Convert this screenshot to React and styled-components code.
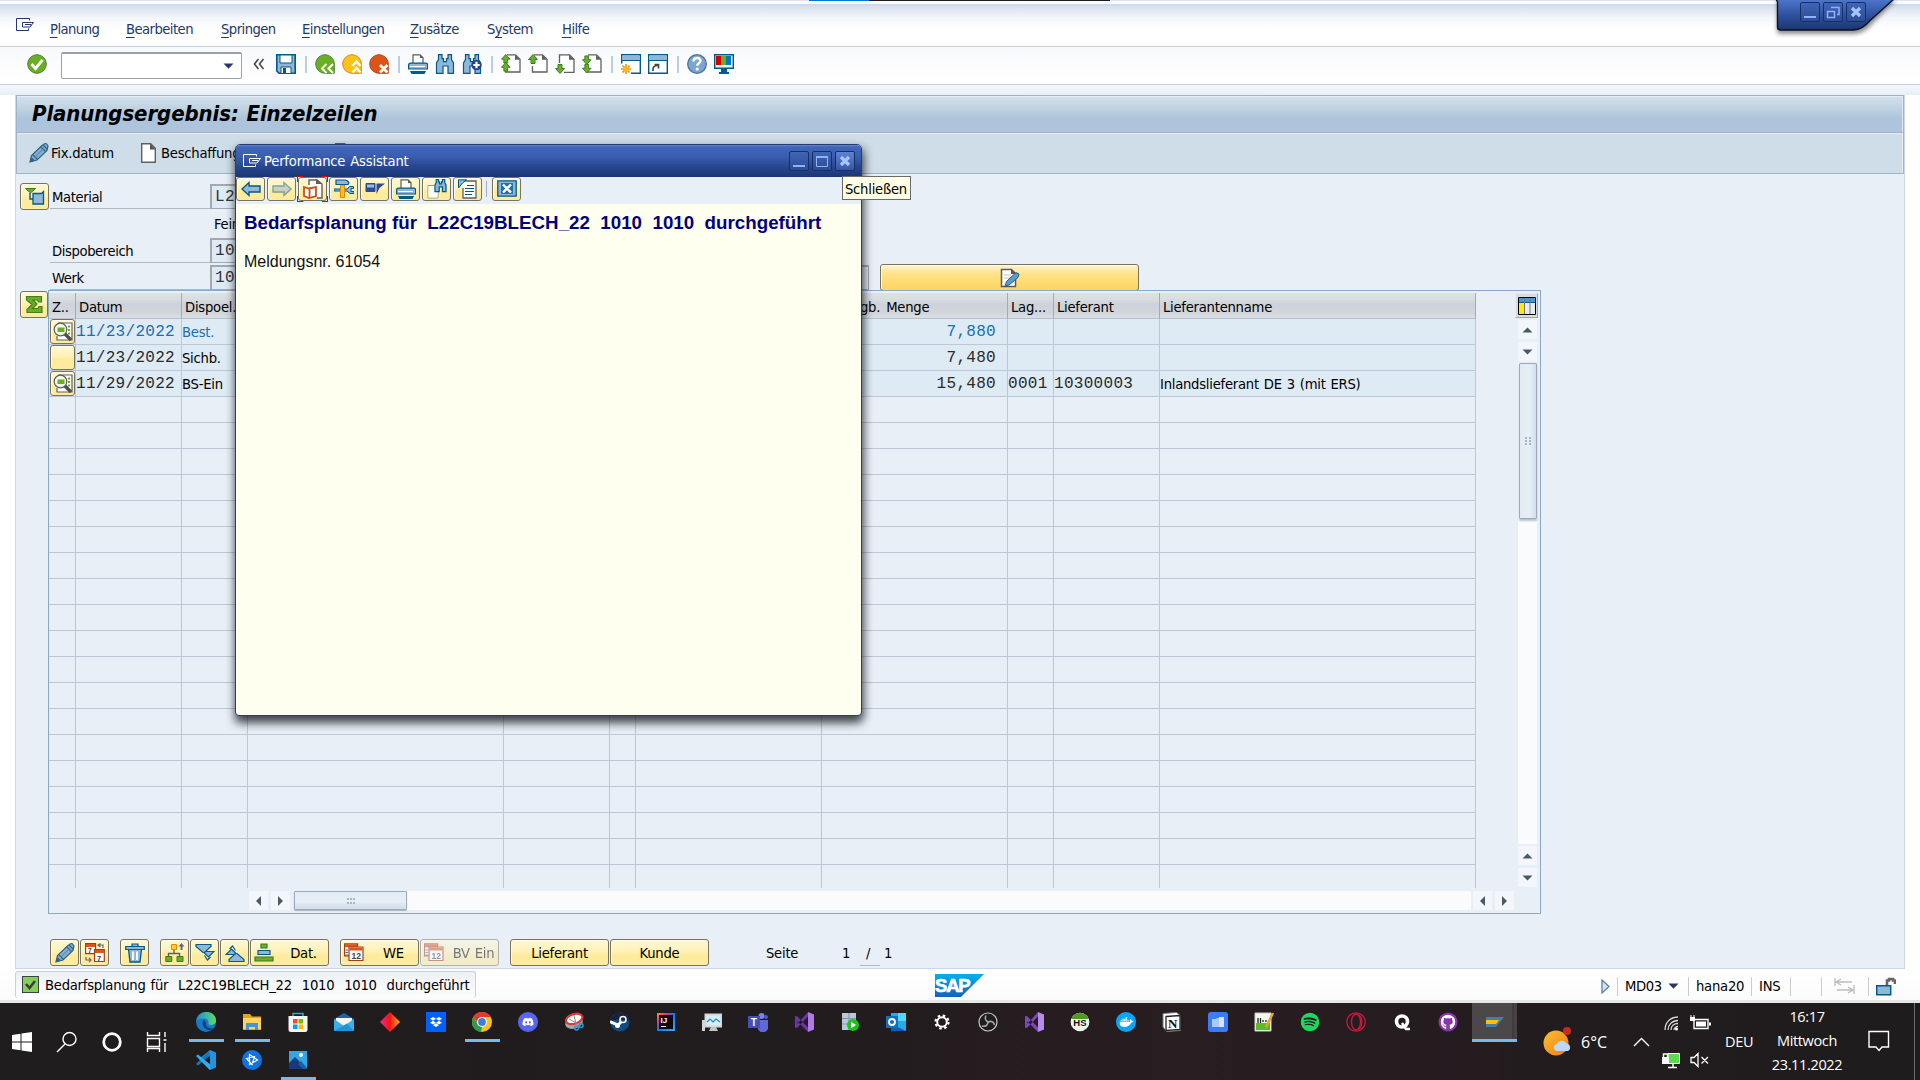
import React from "react";
import styled, { createGlobalStyle, css } from "styled-components";
import { FaDropbox, FaDiscord, FaDocker, FaSpotify, FaGithub } from "react-icons/fa";

const GlobalStyle = createGlobalStyle`
  * { box-sizing: border-box; }
  html, body { margin: 0; padding: 0; overflow: hidden; }
  body { width: 1920px; height: 1080px; background: #fff; }
`;

const ui = css`
  font-family: "DejaVu Sans Condensed", "DejaVu Sans", "Noto Sans", sans-serif;
  font-stretch: condensed;
  font-size: 14.67px;
  letter-spacing: -0.25px;
  word-spacing: 1px;
  line-height: 20px;
  white-space: pre;
`;
const mono = css`
  font-family: "Liberation Mono", monospace;
  font-size: 16px;
  letter-spacing: 0.3px;
`;

/* ---------- frame ---------- */
const Screen = styled.div`
  ${ui}
  position: relative;
  width: 1920px;
  height: 1080px;
  display: flex;
  flex-direction: column;
  background: #fdfdfe;
  color: #000;
`;
const TopEdge = styled.div`
  height: 4px;
  flex: none;
  background: linear-gradient(90deg, #dbe5f5 809px, #0078d7 809px, #0078d7 869px, #1d1d20 869px, #1d1d20 1110px, #dbe5f5 1110px) 0 0 / 100% 1px no-repeat, #fbfcff;
`;
const MenuBar = styled.div`
  height: 43px;
  flex: none;
  display: flex;
  align-items: flex-start;
  padding: 13px 0 0 16px;
  background: linear-gradient(#ccd8e9, #dfe6f1 5px, #f4f7fb 14px, #fff 26px);
  border-bottom: 1px solid #c9d2de;
`;
const MenuItem = styled.span`
  width: ${(p) => p.$w}px;
  margin-top: 2px;
  color: #26386b;
  letter-spacing: ${(p) => p.$ls ?? -0.55}px;
  u { text-underline-offset: 3px; text-decoration-thickness: 1px; }
`;
const MenuIcon = styled.span`
  width: 34px;
  display: flex;
`;
const ToolBar = styled.div`
  height: 38px;
  flex: none;
  display: flex;
  align-items: center;
  gap: 7px;
  padding: 0 0 3px 27px;
  background: linear-gradient(#f7f9fc, #fff);
  border-bottom: 1px solid #c5cfdd;
`;
const Separator = styled.span`
  width: 5px;
  height: 17px;
  background: linear-gradient(90deg, transparent 2px, #b9cde4 2px, #b9cde4 4px, transparent 4px);
`;
const ComboBox = styled.div`
  width: 181px;
  height: 27px;
  margin: 3px 5px 0 7px;
  border: 1px solid #9aa0a8;
  border-top-width: 2px;
  border-radius: 2px;
  background: #fff;
  display: flex;
  align-items: center;
  justify-content: flex-end;
  padding-right: 7px;
`;
const Chevrons = styled.span`
  width: 12px;
  margin: 0 4px 0 -1px;
  display: flex;
`;
const WorkArea = styled.div`
  height: 884px;
  flex: none;
  padding: 10px 15px 0;
  background: linear-gradient(#f5f7fb, #e9eef6 10px, #fff 10px);
`;
const Body = styled.div`
  height: 874px;
  display: flex;
  flex-direction: column;
  border: 1px solid #cdd8e6;
  border-top: 0;
  background: #e8eff7;
`;
const Heading = styled.h1`
  height: 38px;
  flex: none;
  margin: 0;
  padding: 0 0 1px 15px;
  display: flex;
  align-items: center;
  border: 1px solid #9db3c9;
  box-shadow: inset 0 1px #e4eef7, inset -1px 0 #dfe9f3;
  background: linear-gradient(#d2e1ee, #bfd2e0 35%, #adc4dc 62%, #adc4dc);
  font-size: 22px;
  font-weight: bold;
  font-style: italic;
  letter-spacing: -0.1px;
`;
const AppBar = styled.div`
  height: 41px;
  flex: none;
  display: flex;
  align-items: center;
  padding-left: 12px;
  border: 1px solid #9fb4c8;
  border-top: 0;
  box-shadow: inset 0 1px #e6eef4, inset -1px 0 #e6eef4;
  background: #cfdde8;
`;
const AppAction = styled.span`
  display: flex;
  align-items: center;
  gap: ${(p) => p.$gap ?? 2}px;
  width: ${(p) => p.$w}px;
`;

/* ---------- content ---------- */
const Main = styled.div`
  display: flex;
  padding: 9px 0 0 4px;
`;
const Gutter = styled.div`
  width: 28px;
  flex: none;
  display: flex;
  flex-direction: column;
  gap: 81px;
`;
const Button = styled.button`
  ${ui}
  width: ${(p) => p.$w ?? 29}px;
  height: ${(p) => p.$h ?? 27}px;
  flex: none;
  padding: 0;
  display: flex;
  align-items: center;
  justify-content: center;
  border: 1.5px solid #77735f;
  border-radius: 3px;
  color: #000;
  background: ${(p) =>
    p.$strong
      ? "linear-gradient(#fff3cf, #ffe28a 35%, #ffdc74 65%, #fbd463)"
      : "linear-gradient(#fff8d6, #fff2b8 45%, #ffeb9c 60%, #fdeb9f)"};
  box-shadow: inset 1px 1px #fffbe9;
  opacity: ${(p) => (p.$dim ? 0.5 : 1)};
`;
const ButtonText = styled.span`
  flex: 1;
  text-align: center;
  padding-left: ${(p) => p.$pad ?? 0}px;
`;
const Column = styled.div`
  display: flex;
  flex-direction: column;
`;
const Form = styled.div`
  display: flex;
  flex-direction: column;
  padding: 1px 0 0 2px;
`;
const FormRow = styled.div`
  display: flex;
  height: ${(p) => p.$h ?? 27}px;
`;
const Label = styled.div`
  width: 160px;
  height: 25px;
  padding: 3px 0 0 2px;
  letter-spacing: -0.4px;
  border-bottom: 1px solid ${(p) => (p.$plain ? "transparent" : "#b5b8bb")};
`;
const Field = styled.div`
  ${mono}
  width: ${(p) => p.$w ?? 460}px;
  height: 25px;
  padding: 1px 0 0 3px;
  color: #333;
  background: #dfebf4;
  border: 1px solid #a3a9ae;
  border-width: 2px 1px 1px 2px;
`;
const FieldText = styled.div`
  padding: 3px 4px;
`;
const ButtonSlot = styled.div`
  margin: -1px 0 -3px 11px;
`;
const TableBox = styled.div`
  width: 1493px;
  height: 624px;
  border: 1px solid #8aa9c8;
  display: flex;
  flex-direction: column;
`;
const TableTop = styled.div`
  display: flex;
  height: 597px;
`;
const Grid = styled.div`
  width: 1427px;
`;
const columnWidths = [27, 106, 66, 256, 106, 26, 186, 186, 46, 106, 316];
const Row = styled.div`
  display: grid;
  grid-template-columns: ${columnWidths.map((w) => w + "px").join(" ")};
  height: ${(p) => p.$h ?? 26}px;
`;
const HeadCell = styled.div`
  margin-top: 2px;
  height: 26px;
  padding: 4px 0 0 3px;
  overflow: hidden;
  border-right: 1px solid #a4abb3;
  border-bottom: 1px solid #b5c1d0;
  background: linear-gradient(#dee2e5, #d8dde0 25%, #cdd3db 45%, #d2d5dc 80%, #dbe0e4);
`;
const Cell = styled.div`
  height: 100%;
  overflow: hidden;
  padding: 3px 0 0;
  border-right: 1px solid #bdc7d6;
  border-bottom: ${(p) => (p.$open ? 0 : 1)}px solid #bdc7d6;
  background: ${(p) => (p.$filled ? "#deebf5" : "transparent")};
  color: ${(p) => (p.$link ? "#1a6fae" : "#000")};
  ${(p) => p.$mono && mono}
  ${(p) => p.$mono && !p.$link && "color: #2a2a2a;"}
  ${(p) => p.$right && "text-align: right; padding-right: 11px;"}
  ${(p) => p.$button && "padding: 0 0 0 1px;"}
`;
const Rail = styled.div`
  width: 64px;
  padding: 2px 2px 0 0;
  display: flex;
  flex-direction: column;
  align-items: flex-end;
`;
const ConfigButton = styled.div`
  width: 23px;
  height: 25px;
  display: flex;
  align-items: center;
  justify-content: center;
  border: 1px solid #e8ebee;
  border-right-color: #9fa5ab;
  border-bottom-color: #9fa5ab;
  background: #d9dce1;
`;
const ArrowButton = styled.div`
  width: 19px;
  height: 19px;
  flex: none;
  display: flex;
  align-items: center;
  justify-content: center;
  background: #f3f6fa;
  margin: ${(p) => p.$m ?? "0"};
  svg { transform: rotate(${(p) => p.$turn ?? 0}deg); }
`;
const VTrack = styled.div`
  width: 19px;
  height: 481px;
  margin: 2px 1px 2px 0;
  background: #fafbfd;
`;
const thumb = css`
  display: flex;
  align-items: center;
  justify-content: center;
  border: 1px solid #9ba9b9;
  border-radius: 1px;
`;
const VThumb = styled.div`
  ${thumb}
  width: 18px;
  height: 156px;
  margin-left: 1px;
  background: linear-gradient(90deg, #e2ebf3, #e7eef6 60%, #d2deeb);
  box-shadow: 0 2px 2px #b9c2cc;
`;
const HScroll = styled.div`
  display: flex;
  align-items: center;
  height: 21px;
  padding-left: 200px;
  margin-top: 2px;
`;
const HTrack = styled.div`
  width: 1177px;
  height: 19px;
  margin: 0 2px 0 4px;
  background: #fbfbfc;
`;
const HThumb = styled.div`
  ${thumb}
  width: 113px;
  height: 19px;
  background: linear-gradient(#e2ebf4, #e7eef6 55%, #cfdcea);
  box-shadow: 0 1px 1px #aab3bd;
`;
const Footer = styled.div`
  display: flex;
  align-items: center;
  padding: 25px 0 0 34px;
`;
const ButtonGroup = styled.div`
  display: flex;
  gap: 1px;
  margin-right: ${(p) => p.$mr ?? 11}px;
`;
const Pager = styled.div`
  display: flex;
  padding-left: 46px;
`;
const PagerPart = styled.span`
  width: ${(p) => p.$w}px;
  height: 24px;
  padding: 1px 0 0 ${(p) => p.$pad ?? 0}px;
  margin-top: 2px;
  border-bottom: 1px solid ${(p) => (p.$line ? "#b5b8bb" : "transparent")};
`;

/* ---------- status bar ---------- */
const StatusBar = styled.div`
  height: 34px;
  flex: none;
  display: flex;
  align-items: flex-start;
  background: linear-gradient(#fff, #fbfbfc 31px, #e6e8e8 31px);
`;
const StatusMessage = styled.div`
  width: 461px;
  height: 27px;
  margin: 2px 0 0 15px;
  padding: 3px 0 0 6px;
  display: flex;
  gap: 6px;
  align-items: flex-start;
  border: 1px solid #c6d2e2;
  border-bottom: 0;
  border-radius: 3px;
  background: linear-gradient(#edf1f7, #fcfdfe);
`;
const Check = styled.span`
  width: 17px;
  height: 17px;
  margin-top: 1px;
  display: flex;
  border: 1px solid #3b4049;
  background: #84cf57;
`;
const LogoSlot = styled.div`
  width: 49px;
  height: 23px;
  margin: 5px 616px 0 459px;
`;
const StatusRight = styled.div`
  display: flex;
  align-items: center;
  width: 320px;
  height: 24px;
  margin-top: 5px;
`;
const StatusCell = styled.span`
  display: flex;
  align-items: center;
  gap: 6px;
  height: 19px;
  width: ${(p) => p.$w}px;
  padding-left: ${(p) => p.$pad ?? 7}px;
  letter-spacing: ${(p) => p.$ls ?? -0.25}px;
  border-left: 1px solid ${(p) => (p.$first ? "transparent" : "#c9cdd2")};
`;

/* ---------- taskbar ---------- */
const TaskBar = styled.div`
  height: 77px;
  flex: none;
  display: flex;
  background: linear-gradient(90deg, #1f1d1e, #211c1e 40%, #281d21 62%, #231c1f 80%, #1e1c1d);
  color: #fff;
  font-family: "Open Sans", "Noto Sans", sans-serif;
  font-stretch: normal;
  font-size: 14.5px;
  letter-spacing: -0.35px;
  word-spacing: 0;
`;
const StartGroup = styled.div`
  width: 183px;
  padding-left: 10px;
  display: flex;
  align-items: center;
  gap: 21px;
  svg { flex: none; }
`;
const TaskGrid = styled.div`
  display: grid;
  grid-template-columns: repeat(29, 46px);
  grid-template-rows: 39px 38px;
  width: 1334px;
`;
const Task = styled.div`
  display: flex;
  flex-direction: column;
  align-items: center;
  padding-top: ${(p) => (p.$second ? 8 : 9)}px;
  background: ${(p) => (p.$active ? "linear-gradient(90deg, #4c4849 40px, #363234 41px, #474344 42px)" : "transparent")};
  background-clip: padding-box;
  border-left: ${(p) => (p.$active ? 1 : 0)}px solid transparent;
  justify-content: space-between;
  &::after {
    content: "";
    width: ${(p) => (p.$active ? 45 : 35)}px;
    height: 3px;
    background: ${(p) => (p.$open ? "#76b9ed" : "transparent")};
  }
`;
const Weather = styled.div`
  width: 108px;
  display: flex;
  align-items: center;
  gap: 9px;
  padding: 0 0 0 25px;
  font-size: 16px;
  letter-spacing: 0;
`;
const TrayCaret = styled.div`
  width: 36px;
  display: flex;
  align-items: center;
  padding-left: 8px;
`;
const TrayIcons = styled.div`
  display: grid;
  grid-template-columns: 29px 22px;
  grid-template-rows: 39px 36px;
  align-items: center;
  width: 63px;
`;
const Language = styled.div`
  width: 42px;
  display: flex;
  align-items: center;
  padding: 0 0 0 1px;
`;
const Clock = styled.div`
  width: 82px;
  padding-top: 2px;
  line-height: 24px;
  text-align: center;
`;
const Notice = styled.div`
  flex: 1;
  display: flex;
  align-items: center;
  padding: 0 0 1px 20px;
`;
const ShowDesktop = styled.div`
  width: 6px;
  border-left: 1px solid #6d6a6b;
`;

/* ---------- dialog ---------- */
const Dialog = styled.section`
  position: absolute;
  left: 235px;
  top: 144px;
  width: 627px;
  height: 572px;
  display: flex;
  flex-direction: column;
  border: 1px solid #253c78;
  border-radius: 5px 5px 4px 4px;
  background: #fffff0;
  box-shadow: 0 7px 10px rgba(20, 25, 30, 0.7), 3px 3px 8px rgba(20, 25, 30, 0.35);
`;
const DialogTitle = styled.header`
  height: 32px;
  flex: none;
  display: flex;
  align-items: center;
  padding: 0 6px 1px 7px;
  color: #fff;
  border-radius: 4px 4px 0 0;
  background: linear-gradient(#6583c9, #4066ba 2px, #3a5eb0 35%, #26458e 70%, #1c3672);
`;
const DialogTitleText = styled.span`
  flex: 1;
  padding-left: 1px;
  letter-spacing: -0.2px;
`;
const WindowButtons = styled.div`
  display: flex;
  gap: 3px;
`;
const WindowButton = styled.span`
  width: 20px;
  height: 20px;
  display: flex;
  align-items: center;
  justify-content: center;
  border: 1px solid #182f66;
  border-radius: 2px;
  background: ${(p) => (p.$hot ? "linear-gradient(#5f82d6, #3557a5)" : "linear-gradient(#4165b5, #2c4c94)")};
`;
const DialogTools = styled.div`
  height: 27px;
  flex: none;
  display: flex;
  gap: 2px;
  background: #e8eff7;
`;
const DialogSep = styled.span`
  width: 4px;
  height: 16px;
  margin-top: 4px;
  border-left: 1px solid #a9adb2;
  margin-left: 2px;
`;
const FocusFrame = styled.span`
  display: flex;
  margin: -1px -1px;
  padding: 1px;
  background:
    linear-gradient(#e00, #e00) 0 0 / 6px 1px, linear-gradient(#e00, #e00) 0 0 / 1px 6px,
    linear-gradient(#e00, #e00) 100% 0 / 6px 1px, linear-gradient(#e00, #e00) 100% 0 / 1px 6px,
    linear-gradient(#e00, #e00) 0 100% / 6px 1px, linear-gradient(#e00, #e00) 0 100% / 1px 6px,
    linear-gradient(#e00, #e00) 100% 100% / 6px 1px, linear-gradient(#e00, #e00) 100% 100% / 1px 6px;
  background-repeat: no-repeat;
  height: 26px;
`;
const DialogText = styled.div`
  padding: 8px 0 0 8px;
  font-family: "Liberation Sans", Arial, sans-serif;
  font-size: 16px;
  letter-spacing: 0;
  word-spacing: 0;
  color: #111;
`;
const DialogHeading = styled.h2`
  margin: 0 0 18px;
  font-size: 18.75px;
  line-height: 22px;
  letter-spacing: 0;
  color: #00007f;
`;
const Tooltip = styled.div`
  position: absolute;
  left: 842px;
  top: 176px;
  width: 69px;
  height: 24px;
  padding: 2px 0 0 2px;
  border: 1px solid #6a6a6a;
  background: #ffffe6;
`;
const CornerControls = styled.div`
  position: absolute;
  left: 1770px;
  top: 0;
  width: 130px;
  height: 40px;
`;
const CornerButtons = styled.div`
  position: absolute;
  left: 30px;
  top: 2px;
  display: flex;
  gap: 3px;
`;

/* ---------- icons ---------- */
const Svg = ({ s = 20, w, h, vb, children, ...rest }) => (
  <svg width={w ?? s} height={h ?? s} viewBox={vb ?? `0 0 ${w ?? s} ${h ?? s}`} fill="none" {...rest}>{children}</svg>
);
const B = "#005a8c", L = "#91b6d8", G = "#6aaf23", GD = "#3b7a2a";
const glyphText = { fontFamily: "Liberation Sans, sans-serif", fontWeight: "bold", letterSpacing: 0 };

const MenuExit = ({ c = "#26386b" }) => (
  <Svg w={20} h={16} stroke={c} strokeWidth="1">
    <path d="M13.500 3.500v-2H.5v12h12v-2" /><path d="M6.500 5.500h11l-2.500 3M6.500 5.500v4.500h7.500l1.500-2M9 7.500h6" />
  </Svg>
);
const OkIcon = () => (
  <Svg><circle cx="10" cy="10" r="9.300" fill={G} stroke="#527d3c" /><path d="M4.500 10l4 4.500L15.500 6" stroke="#fff" strokeWidth="2.800" /></Svg>
);
const SaveIcon = () => (
  <Svg><path d="M.8.800h18.400v18.400H3L.8 17z" fill={L} stroke={B} strokeWidth="1.600" /><path d="M4 1h12v8H4z" fill="#fff" stroke={B} /><path d="M5 19v-6h10v6" fill="#fff" stroke={B} /><path d="M7 14h3v5H7z" fill={B} /></Svg>
);
const RoundIcon = ({ fill, stroke, kind }) => (
  <Svg>
    <path d="M10 .7a9.300 9.300 0 1 0 0 18.600h9.300V10A9.300 9.300 0 0 0 10 .7z" fill={fill} stroke={stroke} />
    {kind === "back" && <path d="M11.500 10l-4.500 4.500 4.500 4.500M18 10l-4.500 4.500L18 19" stroke="#fff" strokeWidth="2" />}
    {kind === "up" && <path d="M10.500 12l4-4.500 4 4.500M10.500 18.500l4-4.500 4 4.500" stroke="#fff" strokeWidth="2.200" />}
    {kind === "x" && <path d="M11 11l7.500 7.500M18.500 11L11 18.500" stroke="#fff" strokeWidth="2.800" />}
  </Svg>
);
const Printer = () => (
  <Svg><path d="M5 9V.8h7l3 3V9" fill="#fff" stroke="#5a5a5a" strokeWidth="1.200" /><path d="M12 .5v3.500h3.500z" fill="#5a5a5a" /><path d="M.6 11c0-1.500.5-1.900 2-1.900h15c1.300 0 2 .4 2 1.900v4H.6z" fill={L} stroke={B} strokeWidth="1.200" /><path d="M2 12.500h15" stroke="#fff" /><path d="M2 17h16l-1.500 3h-13z" fill={B} /></Svg>
);
const binocPath = "M3.500 .6h3.500v4h1.500v3h3v-3H13v-4h3.500v5l2 3.400v10.400h-5.500v-7.400H8v7.400H1.500V9l2-3.400z";
const Binoc = ({ plus }) => (
  <Svg><path d={binocPath} fill={L} stroke={B} strokeWidth="1.200" />
    {plus && <><circle cx="14.500" cy="11" r="5.200" fill="#26418f" /><path d="M14.500 7.800v6.400M11.300 11h6.400" stroke="#fff" strokeWidth="2.200" /></>}</Svg>
);
const up = (x, y) => `M${x} ${y}l4.500 5h-2.500v4h-4v-4h-2.500z`;
const down = (x, y) => `M${x} ${y}l4.500-5h-2.500v-4h-4v4h-2.500z`;
const PageIcon = ({ kind }) => (
  <Svg>
    <path d={kind === "down" ? "M4.500 9V.8h10l4.500 4.500v13H9" : "M6 .8h8.500l4.500 4.500V18H4.500v-6"} fill="#fff" stroke="#5f5f5f" strokeWidth="1.300" />
    <path d="M14 .8v5h5z" fill="#5f5f5f" />
    <g fill={G} stroke={GD} strokeWidth="1">
      {kind === "first" && <><path d={up(5, .5)} transform="scale(.95)" /><path d={up(5, 9)} transform="scale(.95)" /></>}
      {kind === "up" && <path d={up(5, .5)} />}
      {kind === "down" && <path d={down(5, 19.500)} />}
      {kind === "last" && <><path d={down(5, 11)} transform="scale(.95)" /><path d={down(5, 20)} transform="scale(.95)" /></>}
    </g>
  </Svg>
);
const WindowIcon = ({ link }) => (
  <Svg><path d="M.7.700h18.600v18.600H.7z" fill="#fff" stroke={B} strokeWidth="1.400" /><path d="M1.400 1.400h17.200V6H1.400z" fill={L} /><path d="M1 6.500h18" stroke={B} />
    {link ? <path d="M5 17c-.5-4 1-5.500 4.500-5.500M6.500 10.500h4v4" stroke="#444" strokeWidth="1.700" />
      : <><path d="M0 9.500h10V20H0z" fill="#fff" /><path d="M5 10v10M0 15h10M1.500 11.500l7 7M8.500 11.500l-7 7" stroke="#f39200" strokeWidth="1.600" /><circle cx="5" cy="15" r="2.800" fill="#ffb81a" /></>}
  </Svg>
);
const HelpIcon = () => (
  <Svg><circle cx="10" cy="10" r="9.300" fill="#7da6cd" stroke="#44749c" strokeWidth="1.300" /><path d="M6.500 7.500c0-4.500 7-4.500 7-.7 0 2.200-3.300 2.400-3.300 5" stroke="#fff" strokeWidth="2.400" /><circle cx="10.200" cy="15" r="1.600" fill="#fff" /></Svg>
);
const MonitorIcon = () => (
  <Svg><path d="M.7.700h18.600v13.600H.7z" fill="#e8f0f7" stroke={B} strokeWidth="1.400" /><path d="M2 2h5v9H2z" fill="#d40000" /><path d="M7 2h5v9H7z" fill={G} /><path d="M12 2h5v9h-5z" fill="#0078c0" /><path d="M7 14h6v4H7z" fill={B} /><path d="M5 18h10v2H5z" fill={B} /></Svg>
);
const Pencil = () => (
  <Svg><path d="M1 19l1.500-6.500L12.500 3l2.500-2 2-.5L19 3l-1 4.500L8 17z" fill="#86b0d2" stroke="#2b6488" strokeWidth="1.200" /><path d="M1 19l1.500-5 3.500 3.500z" fill="#2b6488" /><path d="M11.500 3.500l5 5M3.500 11.500l5 5M14 2l4 4" stroke="#2b6488" strokeWidth="1.200" /><path d="M6 14l8-8" stroke="#5f92b6" strokeWidth="1.200" /></Svg>
);
const Doc = () => (
  <Svg w={15} h={20}><path d="M.7.700h9l4.600 4.600v14H.7z" fill="#fff" stroke="#606060" strokeWidth="1.400" /><path d="M9 .5v6h5.500z" fill="#555" /></Svg>
);
const DetailIcon = () => (
  <Svg><path d="M.5 1.500h10L5.500 6z" fill={G} stroke={GD} /><path d="M5 6v6h3" stroke={B} strokeWidth="1.400" /><path d="M8 6.500h8.500l2-2V17H8z" fill={L} stroke={B} strokeWidth="1.300" /></Svg>
);
const SumIcon = () => (
  <Svg><path d="M2.500 1.500h15V7h-3l-1-2H9l4 4-4.500 4.500h5.500l1-2h3v6h-15v-3L8 9.500 2.500 5z" fill={G} stroke="#467e1d" strokeWidth="1.200" /></Svg>
);
const LensIcon = () => (
  <Svg><path d="M5 1h14v17H4v-4" fill="#fff" stroke="#606060" strokeWidth="1.200" /><path d="M15 3.500h2v2h-2zM15 7h2v2h-2zM15 10.500h2v2h-2z" fill={G} /><circle cx="7.500" cy="7.500" r="6.300" fill="#f4f7ee" stroke="#5d5d5d" strokeWidth="1.200" /><path d="M4.500 5.500h7V10h-7z" fill={G} /><path d="M12 12l6 6" stroke="#4d4d4d" strokeWidth="3.400" /></Svg>
);
const EditDoc = () => (
  <Svg><path d="M1.500 1.500h10l4 4V18.500h-14z" fill="#fff" stroke="#5c5c5c" strokeWidth="1.500" /><path d="M11 1v5h5z" fill="#555" /><path d="M4 7h7M4 10h6" stroke="#c4c4c4" /><path d="M5 18l1.500-4.500L16 4.500l3 1.500-1 3.500L9 17z" fill="#5f9cc4" stroke="#20618c" /></Svg>
);
const Tri = () => <Svg w={11} h={6}><path d="M5.500.5L10.500 5.500H.5z" fill="#475a6b" /></Svg>;
const ComboTri = () => <Svg w={11} h={6}><path d="M.5.500h10L5.500 5.800z" fill="#26386b" /></Svg>;
const Grip = ({ turn }) => (
  <Svg w={8} h={6} transform={turn ? "rotate(90)" : undefined}><path d="M0 0h2v2H0zM3 0h2v2H3zM6 0h2v2H6zM0 4h2v2H0zM3 4h2v2H3zM6 4h2v2H6z" fill="#a7b6c6" /></Svg>
);
const ConfigIcon = () => (
  <Svg w={18} h={18}><path d="M.5.500h17v17H.5z" fill="#e8ebee" stroke="#000" /><path d="M1 1h16v4H1z" fill="#4b95d0" /><path d="M1 5.500h16" stroke="#15588e" /><path d="M1 6h5v11H1z" fill="#ffea00" /><path d="M6.500 1v16M12 1v16" stroke="#777" /></Svg>
);
const Calendars = ({ swap }) => swap ? (
  <Svg><g strokeWidth="1.200"><path d="M.6.600h10v10H.6z" fill="#fff" stroke="#a83a20" /><path d="M1 1h9v3H1z" fill="#dc5418" /><path d="M9.500 6.500h9.800v12H9.500z" fill="#fff" stroke="#a83a20" /><path d="M10 7h9v3h-9z" fill="#dc5418" /><path d="M13 2h5v3M15.500 .5L13 2l2.500 2M1 14v3h4M4 15l2 2-2 2" stroke="#666" /></g><text x="3" y="10" fontSize="6.500" fill="#333" style={glyphText}>7</text><text x="12" y="17.500" fontSize="7.500" fill="#333" style={glyphText}>7</text></Svg>
) : (
  <Svg><g strokeWidth="1.200"><path d="M.6 .8h13v12H.6z" fill="#fff" stroke="#a83a20" /><path d="M1 1.200h12v3H1z" fill="#dc5418" /><path d="M1.500 7h2.500M1.500 9.500h2.500M1.500 12h2.500" stroke="#666" /><path d="M5 4h14v13.500H5z" fill="#fff" stroke="#a83a20" /><path d="M5.500 4.500h13v3h-13z" fill="#dc5418" /></g><text x="7.500" y="15.500" fontSize="8.500" fill="#444" style={glyphText}>12</text></Svg>
);
const Trash = () => (
  <Svg><path d="M3.500 6h13l-1.500 13H5z" fill={L} stroke={B} strokeWidth="1.300" /><path d="M.7 3.500h18.600v3H.7zM7 3V1h6v2" fill={L} stroke={B} strokeWidth="1.200" /><path d="M8 8.500v8.500M12 8.500v8.500" stroke="#fff" strokeWidth="1.800" /></Svg>
);
const Tree = () => (
  <Svg><path d="M9 7v4M3.500 14v-3.500h11V14" stroke="#606060" strokeWidth="1.400" /><path d="M6.500 1.500h5v5h-5z" fill="#ffd02a" stroke="#e58b00" /><path d="M.8 13.500h6v5h-6zM12 13.500h6v5h-6z" fill={G} stroke={GD} /><path d="M16.500 0l3 3.500h-2V7h-2V3.500h-2z" fill="#666" /></Svg>
);
const Filter = ({ flip }) => (
  <Svg transform={flip ? "rotate(180)" : undefined}><g fill={L} stroke={B} strokeWidth="1.200"><path d="M8 8.500h11l-5.500 5.500z" /><path d="M1 1.500h15v2l-6.500 6H8L1 3.500z" /><path d="M9.500 12.500l3 4.500 3-3" fill="none" /></g></Svg>
);
const Stack = () => (
  <Svg><path d="M7 1h6v4H7zM1 14h18v4H1z" fill={G} stroke={GD} strokeWidth="1.200" /><path d="M4 7.500h12v4H4z" fill={L} stroke={B} strokeWidth="1.200" /></Svg>
);
const Arrow = ({ flip, dim }) => (
  <Svg opacity={dim ? 0.5 : 1} transform={flip ? "scale(-1 1)" : undefined}><path d="M1 10l7-6.500V7h11v6H8v3.500z" fill={L} stroke={B} strokeWidth="1.400" /></Svg>
);
const BookIcon = () => (
  <Svg><path d="M6 6V1h8l5 4v14h-5" fill="#fff" stroke="#5f5f5f" strokeWidth="1.400" /><path d="M13 0v5h6z" fill="#5f5f5f" /><path d="M1 8l5 1.500 7-1.500v9l-7 2-5-2z" fill="#fff" stroke="#c8501c" strokeWidth="1.800" /><path d="M6.500 9v10" stroke="#c8501c" strokeWidth="1.800" /></Svg>
);
const ToolsIcon = () => (
  <Svg><path d="M0 10h13l2.500-2.500h4v2H17v3h3v2h-4L13 12H0z" fill={L} stroke={B} /><path d="M6.500 6h4v12.500h-4z" fill="#ffbf1f" stroke="#e08a00" /><path d="M2 1h9c2 0 3 1 4 3l-1 1.500H2z" fill={L} stroke={B} strokeWidth="1.200" /></Svg>
);
const ToggleIcon = () => (
  <Svg><path d="M1 4.500h9v8H1z" fill="#2c4c92" stroke="#2c4c92" /><path d="M2 5.500h7v3H2z" fill="#9bbbe0" /><path d="M11.500 4.500H20l-5.500 4.500-3 6z" fill="#2c4c92" /></Svg>
);
const FindDoc = () => (
  <Svg><path d="M1 6.500h6M1 6.500v12.500h10v-8" fill="none" stroke="#9a9a9a" /><path d="M1.500 7h9v11.500h-9z" fill="#fdfdf6" /><g transform="translate(7 0) scale(.65)"><path d={binocPath} fill={L} stroke={B} strokeWidth="1.900" /></g></Svg>
);
const DocList = () => (
  <Svg><path d="M5 2h13v17H5V9" fill="#fff" stroke="#5f5f5f" strokeWidth="1.300" /><path d="M.5 .8h8L4.500 4 .5 9z" fill={L} stroke={B} /><path d="M9 6.500h7M7 9.500h9M7 12.500h9M7 15.500h7" stroke={B} /></Svg>
);
const CloseBox = () => (
  <Svg><path d="M.8 1.800h18.400v15.400H.8z" fill={L} stroke={B} strokeWidth="1.300" /><path d="M4 4h12v11H4z" fill={B} opacity=".75" /><path d="M6 5.500l8 8M14 5.500l-8 8" stroke="#fff" strokeWidth="2.400" /></Svg>
);
const WinGlyph = ({ kind }) => (
  <Svg w={14} h={14} stroke="#8fb2ff" strokeWidth="2">
    {kind === "min" && <path d="M1 12h12" />}
    {kind === "max" && <><path d="M1.500 2.500h11v10h-11z" strokeWidth="1" /><path d="M1 3h12" /></>}
    {kind === "restore" && <path d="M1.500 6.500h7v6h-7zM5 2.500h8v7h-2" strokeWidth="1.500" />}
    {kind === "close" && <path d="M3 3l8 8M11 3l-8 8" strokeWidth="3.200" stroke="#a9c4ff" />}
  </Svg>
);
const SapLogo = () => (
  <Svg w={49} h={23}>
    <defs><linearGradient id="sap" x2="0" y2="1"><stop stopColor="#00b1eb" /><stop offset="1" stopColor="#1661be" /></linearGradient></defs>
    <path d="M0 0h49L26 23H0z" fill="url(#sap)" />
    <text x="0" y="18" fontFamily="Liberation Sans" fontWeight="bold" fontSize="18.500" fill="#fff" stroke="#fff" strokeWidth=".7" letterSpacing="-1.200">SAP</text>
  </Svg>
);

const VsGlyph = ({ a, b }) => (
  <Svg><path d="M1 5.500l2-1.500L14 15.500V20L1 7zM1 14.500l2 1.500L14 4.500V0" fill={a} /><path d="M1 4l2.500 1v10L1 16z" fill={a} /><path d="M14 0l6 2.500v15L14 20z" fill={b} /></Svg>
);
const apps = [
  { open: 1, icon: <Svg><defs><linearGradient id="edge" x2="1"><stop stopColor="#1b8fd8" /><stop offset="1" stopColor="#5bdc63" /></linearGradient></defs><circle cx="10" cy="10" r="10" fill="#1779c4" /><path d="M.3 9C1 3 5.500 0 10.500 0 16.500 0 20 4 20 8.500c0 3-2.500 4.500-5 4.500-2 0-3-1-2.500-2 .5-2-1-4.500-4.500-4.500C4 6.500 1 8 .3 9z" fill="url(#edge)" /><path d="M8 7.500c-3 3-1 9 4 10.500 3 .8 5-.5 6-2-4 1.500-9-1-8-5.500z" fill="#0d3f80" /></Svg> },
  { open: 1, icon: <Svg><path d="M1 2h7l2 2.500h9V18H1z" fill="#e9a31a" /><path d="M1 6h18v11H1z" fill="#ffd45c" /><path d="M4 18v-7h12v7h-3v-3H7v3z" fill="#3e95dc" /></Svg> },
  { icon: <Svg><path d="M5 5V1.500h10V5" stroke="#2fa6dd" strokeWidth="1.500" /><path d="M.5 4h19v13.500a2.500 2.500 0 0 1-2.500 2.500H3A2.500 2.500 0 0 1 .5 17.500z" fill="#f4f5f6" /><path d="M5 7h4.500v4.500H5z" fill="#f25022" /><path d="M10.500 7H15v4.500h-4.500z" fill="#7fba00" /><path d="M5 12.500h4.500V17H5z" fill="#00a4ef" /><path d="M10.500 12.500H15V17h-4.500z" fill="#ffb900" /></Svg> },
  { icon: <Svg><path d="M0 7l10-6 10 6v12H0z" fill="#1467b3" /><path d="M2 6h16v8H2z" fill="#f3f5f7" /><path d="M0 7l10 7 10-7v12H0z" fill="#35b2ee" /><path d="M0 19L13 11.500 20 19z" fill="#1f93dc" /></Svg> },
  { icon: <Svg><defs><linearGradient id="dia" x2="1"><stop stopColor="#f0298d" /><stop offset=".5" stopColor="#f21414" /><stop offset="1" stopColor="#ffae00" /></linearGradient></defs><path d="M10 0l10 10-10 10L0 10z" fill="url(#dia)" /></Svg> },
  { icon: <Svg><path d="M0 0h20v20H0z" fill="#0061ff" /><FaDropbox x="4" y="4" size={12} color="#fff" /></Svg> },
  { open: 1, icon: <Svg><circle cx="10" cy="10" r="10" fill="#fbc116" /><path d="M1.300 5A10 10 0 0 1 18.700 5H10L6 12z" fill="#e23b2e" /><path d="M1.300 5L6 13l4 2-1 5A10 10 0 0 1 1.300 5z" fill="#2a9d4c" /><circle cx="10" cy="10" r="5" fill="#fff" /><circle cx="10" cy="10" r="3.900" fill="#3b7de9" /></Svg> },
  { icon: <Svg><circle cx="10" cy="10" r="10" fill="#5865f2" /><FaDiscord x="4" y="4" size={12} color="#fff" /></Svg> },
  { icon: <Svg><ellipse cx="9.500" cy="10.500" rx="9" ry="6" fill="#a9a9a9" transform="rotate(-18 10 9)" /><ellipse cx="10.500" cy="7" rx="8.500" ry="4.800" fill="#fff" stroke="#d83b35" strokeWidth="2.200" transform="rotate(-18 10 8)" /><path d="M10 3l2 9M5 7l9 5" stroke="#888" /><circle cx="12.500" cy="16" r="2" stroke="#2a9ad8" strokeWidth="1.500" /><circle cx="17" cy="13.500" r="2" stroke="#2a9ad8" strokeWidth="1.500" /></Svg> },
  { icon: <Svg><circle cx="10" cy="10" r="9.500" fill="#124b80" /><path d="M.6 9A9.500 9.500 0 0 1 19.400 9L10 7z" fill="#15233c" /><circle cx="13" cy="7.500" r="3" stroke="#fff" strokeWidth="1.600" /><path d="M0 9.500l8 3.500 3-3" stroke="#fff" strokeWidth="3" /><circle cx="7.500" cy="13.500" r="2.500" fill="#fff" /></Svg> },
  { icon: <Svg><defs><linearGradient id="ij" x2="1" y2="1"><stop stopColor="#fc8f2c" /><stop offset=".3" stopColor="#e2307e" /><stop offset=".5" stopColor="#087cfa" /><stop offset="1" stopColor="#37a8ff" /></linearGradient></defs><path d="M1 1h18v18H1z" fill="url(#ij)" /><path d="M3 3h14v14H3z" fill="#120812" /><text x="4.500" y="11" fontSize="8" fill="#fff" style={glyphText}>IJ</text><path d="M5 14.500h5" stroke="#fff" /></Svg> },
  { icon: <Svg><path d="M0 8h3v11H0z" fill="#d2d7d2" /><path d="M3.500 2.500h16v12h-16z" fill="#d5effa" stroke="#d5d5d5" strokeWidth="2" /><path d="M5 10l3-3 3 3 3-3 4 3" stroke="#2b87bd" strokeWidth="1.200" /><path d="M9 15h5l2 4H7z" fill="#c4c4c4" /></Svg> },
  { icon: <Svg><circle cx="13.500" cy="4" r="3" fill="#7b83eb" /><circle cx="18" cy="5" r="2" fill="#5059c9" /><path d="M9 8h11v5a5 5 0 0 1-10 4z" fill="#6169d6" /><path d="M0 4h12v12H0z" fill="#454fb5" /><text x="2.800" y="13.500" fontSize="10" fill="#fff" style={glyphText}>T</text></Svg> },
  { icon: <VsGlyph a="#6b35a8" b="#b377ea" /> },
  { icon: <Svg><path d="M2 1h14v17H2z" fill="#b7c8d8" /><path d="M2 6.500h14M2 12h14M9 1v17" stroke="#7c97b5" /><circle cx="13" cy="13" r="6" fill="#1fc315" /><path d="M11 9.800l5 3.200-5 3.200z" fill="#fff" /></Svg> },
  { icon: <Svg><path d="M5 1h15v18H5z" fill="#28a8e8" /><path d="M12 1h8v8h-8z" fill="#50d9ff" /><path d="M5 12l15 7H5z" fill="#0f5fae" /><path d="M0 4h12v12H0z" fill="#0f6fc5" /><circle cx="6" cy="10" r="3" stroke="#fff" strokeWidth="1.800" /></Svg> },
  { icon: <Svg stroke="#fff"><circle cx="10" cy="10" r="4.800" strokeWidth="2" /><circle cx="10" cy="10" r="6.500" strokeWidth="2.200" strokeDasharray="2.550 2.550" /></Svg> },
  { icon: <Svg><circle cx="10" cy="10" r="9" stroke="#c9c9c9" strokeWidth="1.200" fill="#211d1f" /><path d="M8 3.500c-1.500 3 0 5.500 2 6.500M10 10c3-1.500 6 0 6.500 3M10 10c0 3-2.500 5-6 4" stroke="#a8a8a8" strokeWidth="1.600" /></Svg> },
  { icon: <VsGlyph a="#7a49b8" b="#b88bea" /> },
  { icon: <Svg><circle cx="10" cy="10" r="9.300" fill="#ecf3e8" /><path d="M.7 10a9.300 9.300 0 0 1 18.600 0z" fill="#4c9b22" /><path d="M1 7h18v6H1z" fill="#f2f6ef" /><text x="3.300" y="13.500" fontSize="9.500" fill="#111" style={glyphText}>HS</text></Svg> },
  { icon: <Svg><circle cx="10" cy="10" r="10" fill="#0aa5f7" /><FaDocker x="3.500" y="3" size={14} color="#fff" /></Svg> },
  { icon: <Svg><path d="M1 1.500L14.500.5l4 3v15L4.500 19.500 1 15z" fill="#fff" stroke="#777" /><path d="M4 4.500l14-1v14l-14 1z" fill="#fff" stroke="#222" strokeWidth="1.300" /><text x="6" y="16" fontSize="13" fill="#111" style={{ ...glyphText, fontFamily: "Liberation Serif, serif" }}>N</text></Svg> },
  { icon: <Svg><rect width="20" height="20" rx="3" fill="#3b7cff" /><path d="M4 7h4l1-1h3v9H4z" fill="#a9caff" /><path d="M11 5h5v10h-5z" fill="#d5e5ff" /></Svg> },
  { icon: <Svg><path d="M1 1h16v18H1z" fill="#f4f7ec" stroke="#ccc" /><path d="M2 11h14v7H2z" fill="#5eb92b" /><path d="M4 6v5M6.500 6v5M9 8v2M12 8v2" stroke="#222" strokeWidth="1.300" /><path d="M19 1l-7 14" stroke="#f0a41f" strokeWidth="2.500" /></Svg> },
  { icon: <Svg><FaSpotify x="0.500" y="0.500" size={19} color="#1ed760" /></Svg> },
  { icon: <Svg stroke="#c9193f" strokeWidth="1.300"><circle cx="10" cy="10" r="9.200" /><ellipse cx="10" cy="10" rx="4.500" ry="8" /><path d="M12 2.500c5 2 5 13 0 15" /></Svg> },
  { icon: <Svg stroke="#fff"><circle cx="10" cy="9.500" r="5.500" strokeWidth="3.600" /><path d="M10 11l4 6h4" strokeWidth="2.500" /></Svg> },
  { icon: <Svg><circle cx="10" cy="10" r="9.500" fill="#8a35a8" /><FaGithub x="2.500" y="2.500" size={15} color="#fff" /></Svg> },
  { open: 1, active: 1, icon: <Svg><path d="M1 5h18L11 15H1z" fill="#3e7fb0" /><path d="M1 8h13l-3 4H1z" fill="#fdc010" /></Svg> },
];
const secondRow = [
  { icon: <Svg><path d="M14 0l6 2.500v15L14 20 3 9z" fill="#2493dd" /><path d="M14 5.500v9L8 10z" fill="#1f1d1e" /><path d="M14 5.500L2 15.500 0 14l13-13z" fill="#1277bd" /><path d="M0 6l2-1.500 12 10V20z" fill="#35a9ef" /></Svg> },
  { icon: <Svg><circle cx="10" cy="10" r="10" fill="#0f73e0" /><g stroke="#fff" strokeWidth="1.200"><path d="M7.500 4.500l8 5.500-8 4.500zM4.500 8.500l8-2-2.500 8z" /></g></Svg> },
  { open: 1, icon: <Svg><path d="M1 1h18v18H1z" fill="#32a5e6" /><path d="M1 13l6-6 12 12H1z" fill="#173b79" /><path d="M10 14l3-3 6 7v1h-4z" fill="#1f5ca8" /><circle cx="13" cy="5" r="2" fill="#fff" /></Svg> },
];

/* ---------- data ---------- */
const menus = [
  ["", "P", "lanung", 76], ["", "B", "earbeiten", 95], ["", "S", "pringen", 81], ["", "E", "instellungen", 108],
  ["", "Z", "usätze", 77], ["S", "y", "stem", 75], ["", "H", "ilfe", 60],
];
const headings = ["Z..", "Datum", "Dispoel...", "", "", "", "", "gb.", "", "Lieferant", "Lieferantenname"];
const entries = [
  { icon: true, link: true, date: "11/23/2022", type: "Best.", qty: "7,880" },
  { date: "11/23/2022", type: "Sichb.", qty: "7,480" },
  { icon: true, date: "11/29/2022", type: "BS-Ein", qty: "15,480", loc: "0001", supplier: "10300003", name: "Inlandslieferant DE 3 (mit ERS)" },
];
const HeadPair = styled.span`
  display: inline-block;
  margin-left: ${(p) => p.$ml}px;
`;

const DataRow = ({ e }) => {
  const c = { $filled: true, $link: e.link };
  return (
    <Row>
      <Cell {...c} $button><Button $w={25} $h={25}>{e.icon && <LensIcon />}</Button></Cell>
      <Cell {...c} $mono>{e.date}</Cell>
      <Cell {...c}>{e.type}</Cell>
      <Cell {...c} /><Cell {...c} /><Cell {...c} /><Cell {...c} />
      <Cell {...c} $mono $right>{e.qty}</Cell>
      <Cell {...c} $mono>{e.loc}</Cell>
      <Cell {...c} $mono>{e.supplier}</Cell>
      <Cell {...c}>{e.name}</Cell>
    </Row>
  );
};

export default function App() {
  return (
    <>
      <GlobalStyle />
      <Screen>
        <TopEdge />
        <MenuBar>
          <MenuIcon><MenuExit /></MenuIcon>
          {menus.map(([a, u, b, w]) => <MenuItem key={u} $w={w}>{a}<u>{u}</u>{b}</MenuItem>)}
        </MenuBar>
        <ToolBar>
          <OkIcon />
          <ComboBox><ComboTri /></ComboBox>
          <Chevrons><Svg w={12} h={12} stroke="#4c4c4c" strokeWidth="1.700"><path d="M5.500 1L1.500 6l4 5M10.500 1l-4 5 4 5" /></Svg></Chevrons>
          <SaveIcon />
          <Separator />
          <RoundIcon fill={G} stroke="#4c803c" kind="back" />
          <RoundIcon fill="#ffc21a" stroke="#ea7d15" kind="up" />
          <RoundIcon fill="#dc5418" stroke="#b5401a" kind="x" />
          <Separator />
          <Printer /><Binoc /><Binoc plus />
          <Separator />
          <PageIcon kind="first" /><PageIcon kind="up" /><PageIcon kind="down" /><PageIcon kind="last" />
          <Separator />
          <WindowIcon /><WindowIcon link />
          <Separator />
          <HelpIcon /><MonitorIcon />
        </ToolBar>
        <WorkArea>
          <Body>
            <Heading>Planungsergebnis: Einzelzeilen</Heading>
            <AppBar>
              <AppAction $w={112}><Pencil />Fix.datum</AppAction>
              <AppAction $w={194} $gap={5}><Doc />Beschaffung</AppAction>
              <AppAction><Doc /></AppAction>
            </AppBar>
            <Main>
              <Gutter>
                <Button $h={27}><DetailIcon /></Button>
                <Button $w={28} $h={27}><SumIcon /></Button>
              </Gutter>
              <Column>
                <Form>
                  <FormRow><Label>Material</Label><Field>L22</Field></FormRow>
                  <FormRow><Label $plain /><FieldText>Fein</FieldText></FormRow>
                  <FormRow><Label>Dispobereich</Label><Field>101</Field></FormRow>
                  <FormRow $h={25}>
                    <Label>Werk</Label><Field $w={659}>101</Field>
                    <ButtonSlot><Button $w={259} $strong><EditDoc /></Button></ButtonSlot>
                  </FormRow>
                </Form>
                <TableBox>
                  <TableTop>
                    <Grid>
                      <Row $h={28}>
                        {headings.map((h, i) => (
                          <HeadCell key={i}>
                            {i === 7 ? <><HeadPair $ml={35}>gb.</HeadPair><HeadPair $ml={6}>Menge</HeadPair></> : i === 8 ? "Lag..." : h}
                          </HeadCell>
                        ))}
                      </Row>
                      {entries.map((e, i) => <DataRow key={i} e={e} />)}
                      {Array.from({ length: 19 }, (_, r) => (
                        <Row key={r} $h={r === 18 ? 23 : 26}>
                          {columnWidths.map((_, c) => <Cell key={c} $open={r === 18} />)}
                        </Row>
                      ))}
                    </Grid>
                    <Rail>
                      <ConfigButton><ConfigIcon /></ConfigButton>
                      <ArrowButton $m="2px 1px 0 0"><Tri /></ArrowButton>
                      <ArrowButton $m="3px 1px 0 0" $turn={180}><Tri /></ArrowButton>
                      <VTrack><VThumb><Grip turn /></VThumb></VTrack>
                      <ArrowButton $m="0 1px 0 0"><Tri /></ArrowButton>
                      <ArrowButton $m="3px 1px 0 0" $turn={180}><Tri /></ArrowButton>
                    </Rail>
                  </TableTop>
                  <HScroll>
                    <ArrowButton $turn={-90}><Tri /></ArrowButton>
                    <ArrowButton $turn={90} $m="0 0 0 3px"><Tri /></ArrowButton>
                    <HTrack><HThumb><Grip /></HThumb></HTrack>
                    <ArrowButton $turn={-90}><Tri /></ArrowButton>
                    <ArrowButton $turn={90} $m="0 0 0 3px"><Tri /></ArrowButton>
                  </HScroll>
                </TableBox>
              </Column>
            </Main>
            <Footer>
              <ButtonGroup>
                <Button><Pencil /></Button><Button><Calendars swap /></Button>
              </ButtonGroup>
              <ButtonGroup><Button><Trash /></Button></ButtonGroup>
              <ButtonGroup>
                <Button><Tree /></Button><Button><Filter /></Button><Button><Filter flip /></Button>
                <Button $w={79}><Svg w={3} /><Stack /><ButtonText $pad={5}>Dat.</ButtonText></Button>
              </ButtonGroup>
              <ButtonGroup>
                <Button $w={79}><Svg w={3} /><Calendars /><ButtonText $pad={5}>WE</ButtonText></Button>
                <Button $w={79} $dim><Svg w={3} /><Calendars /><ButtonText $pad={5}>BV Ein</ButtonText></Button>
              </ButtonGroup>
              <ButtonGroup>
                <Button $w={99}>Lieferant</Button><Button $w={99}>Kunde</Button>
              </ButtonGroup>
              <Pager>
                <PagerPart $w={76}>Seite</PagerPart>
                <PagerPart $w={18}>1</PagerPart>
                <PagerPart $w={20} $pad={6} $line>/</PagerPart>
                <PagerPart $w={20} $pad={4}>1</PagerPart>
              </Pager>
            </Footer>
          </Body>
        </WorkArea>
        <StatusBar>
          <StatusMessage>
            <Check><Svg w={15} h={15}><path d="M3 7l3.500 4L12 4" stroke="#3a3f3a" strokeWidth="2.600" /></Svg></Check>
            {"Bedarfsplanung für  L22C19BLECH_22  1010  1010  durchgeführt"}
          </StatusMessage>
          <LogoSlot><SapLogo /></LogoSlot>
          <StatusRight>
            <StatusCell $w={17} $pad={0} $first><Svg w={9} h={15}><path d="M1 1l7 6.500L1 14z" fill="#d5e3f1" stroke="#5a82ac" strokeWidth="1.300" /></Svg></StatusCell>
            <StatusCell $w={71} $ls={-0.4}>MD03<ComboTri /></StatusCell>
            <StatusCell $w={63}>hana20</StatusCell>
            <StatusCell $w={39}>INS</StatusCell>
            <StatusCell $w={31} />
            <StatusCell $w={47} $pad={12}><Svg w={21} h={16} stroke="#bcbcbc" strokeWidth="1.300"><path d="M1 0v8M2 4h16M7 1L2 4l5 3M20 7v9M19 12H3M14 9l5 3-5 3" /></Svg></StatusCell>
            <StatusCell $w={40} $pad={7}><Svg w={20} h={19}><path d="M11 9V3.500h2V2h4v1.500h2V7" stroke="#666" strokeWidth="2.600" /><path d="M.7 8.700h14v9H.7z" fill={L} stroke={B} strokeWidth="1.500" /></Svg></StatusCell>
          </StatusRight>
        </StatusBar>
        <TaskBar>
          <StartGroup>
            <Svg w={24} h={24} vb="-2 -2 24 24"><path d="M0 3l8.500-1.200v7.700H0zM9.500 1.600L20 0v9.500H9.500zM0 10.500h8.500v7.700L0 17zM9.500 10.500H20V20L9.500 18.400z" fill="#fff" /></Svg>
            <Svg w={24} h={24} stroke="#fff" strokeWidth="1.400"><circle cx="14.500" cy="9" r="6.500" /><path d="M10 14l-8 8" /></Svg>
            <Svg w={24} h={24} stroke="#fff" strokeWidth="2.800"><circle cx="12" cy="12" r="8.300" /></Svg>
            <Svg w={24} h={24} stroke="#fff" strokeWidth="1.400"><path d="M2.500 2v3.500h12V2M2.500 8.500h12v8h-12zM2.500 22v-3.500h12V22M20 2v5M20 13v9M18.500 10h3" /></Svg>
          </StartGroup>
          <TaskGrid>
            {apps.map((a, i) => <Task key={i} $open={a.open} $active={a.active}>{a.icon}</Task>)}
            {secondRow.map((a, i) => <Task key={i} $second $open={a.open}>{a.icon}</Task>)}
          </TaskGrid>
          <Weather>
            <Svg w={30} h={30}><defs><linearGradient id="sun" x2="1" y2="1"><stop stopColor="#fcc02d" /><stop offset="1" stopColor="#f07a1d" /></linearGradient></defs><circle cx="14" cy="16" r="12.500" fill="url(#sun)" /><circle cx="25" cy="4" r="4" fill="#c92b1f" /><path d="M14 24a4 4 0 0 1 1-7.500 5.500 5.500 0 0 1 9.500 0A4 4 0 0 1 26 24z" fill="#bcd7fa" /></Svg>
            6°C
          </Weather>
          <TrayCaret><Svg w={17} h={10} stroke="#fff" strokeWidth="1.400"><path d="M1 9l7.500-7.500L16 9" /></Svg></TrayCaret>
          <TrayIcons>
            <Svg w={18} h={18} stroke="#d8d8d8" strokeWidth="1.300"><path d="M4 16C4 9 9 3 17 3M7 16C7 11 11 6.500 17 6.500M10 16c0-4 3-6.500 7-6.500M13 16c0-2 2-3.500 4-3.500" /><circle cx="15.500" cy="15" r="1.500" fill="#fff" stroke="none" /></Svg>
            <Svg w={21} h={16}><path d="M4 4.500h14v9H4z" stroke="#fff" strokeWidth="1.400" /><path d="M6 6.500h10v5H6z" fill="#fff" /><path d="M19 7.500h2v3h-2zM0 2h5v4H0z" fill="#fff" /><path d="M1 0v3M4 0v3" stroke="#fff" /></Svg>
            <Svg w={20} h={18}><path d="M7 2.500h11.500v10H7z" fill="#5edb4d" stroke="#fff" /><path d="M1 6h7v7H1z" fill="#fff" /><path d="M2.500 6V3h4v3M12 13v3M7 16.500h9" stroke="#fff" strokeWidth="1.500" /></Svg>
            <Svg w={20} h={16} stroke="#fff" strokeWidth="1.300"><path d="M1 5.500h3L8 1.500v13L4 10.500H1zM11.500 5l6.500 6.500M18 5l-6.500 6.500" /></Svg>
          </TrayIcons>
          <Language>DEU</Language>
          <Clock>16:17<br />Mittwoch<br />23.11.2022</Clock>
          <Notice><Svg w={22} h={22} stroke="#fff" strokeWidth="1.400"><path d="M1 1.500h19.500v15.500h-6.500l-3 3.500-3-3.500H1z" /></Svg></Notice>
          <ShowDesktop />
        </TaskBar>

        <CornerControls>
          <Svg w={130} h={40}>
            <defs><linearGradient id="tab" x2="0" y2="1"><stop stopColor="#4f78cf" /><stop offset=".6" stopColor="#2c4d98" /><stop offset="1" stopColor="#1a3570" /></linearGradient>
              <filter id="soft"><feGaussianBlur stdDeviation="2" /></filter></defs>
            <path d="M7 0v31q0 3 3 3h75q10-1 17-10l24-24z" fill="#222" opacity=".5" filter="url(#soft)" />
            <path d="M5.500-2l2 4v25q0 3 3 3h73q9-.5 16-9L125-2z" fill="url(#tab)" stroke="#0c1020" strokeWidth="1.400" />
          </Svg>
          <CornerButtons>
            <WindowButton><WinGlyph kind="min" /></WindowButton>
            <WindowButton><WinGlyph kind="restore" /></WindowButton>
            <WindowButton><WinGlyph kind="close" /></WindowButton>
          </CornerButtons>
        </CornerControls>

        <Dialog>
          <DialogTitle>
            <MenuExit c="#fff" />
            <DialogTitleText>Performance Assistant</DialogTitleText>
            <WindowButtons>
              <WindowButton><WinGlyph kind="min" /></WindowButton>
              <WindowButton><WinGlyph kind="max" /></WindowButton>
              <WindowButton $hot><WinGlyph kind="close" /></WindowButton>
            </WindowButtons>
          </DialogTitle>
          <DialogTools>
            <Button $h={24}><Arrow /></Button>
            <Button $h={24}><Arrow flip dim /></Button>
            <FocusFrame><Button $h={24}><BookIcon /></Button></FocusFrame>
            <Button $h={24}><ToolsIcon /></Button>
            <Button $h={24}><ToggleIcon /></Button>
            <Button $h={24}><Printer /></Button>
            <Button $h={24}><FindDoc /></Button>
            <Button $h={24}><DocList /></Button>
            <DialogSep />
            <Button $h={24}><CloseBox /></Button>
          </DialogTools>
          <DialogText>
            <DialogHeading>{"Bedarfsplanung für  L22C19BLECH_22  1010  1010  durchgeführt"}</DialogHeading>
            Meldungsnr. 61054
          </DialogText>
        </Dialog>
        <Tooltip>Schließen</Tooltip>
      </Screen>
    </>
  );
}
